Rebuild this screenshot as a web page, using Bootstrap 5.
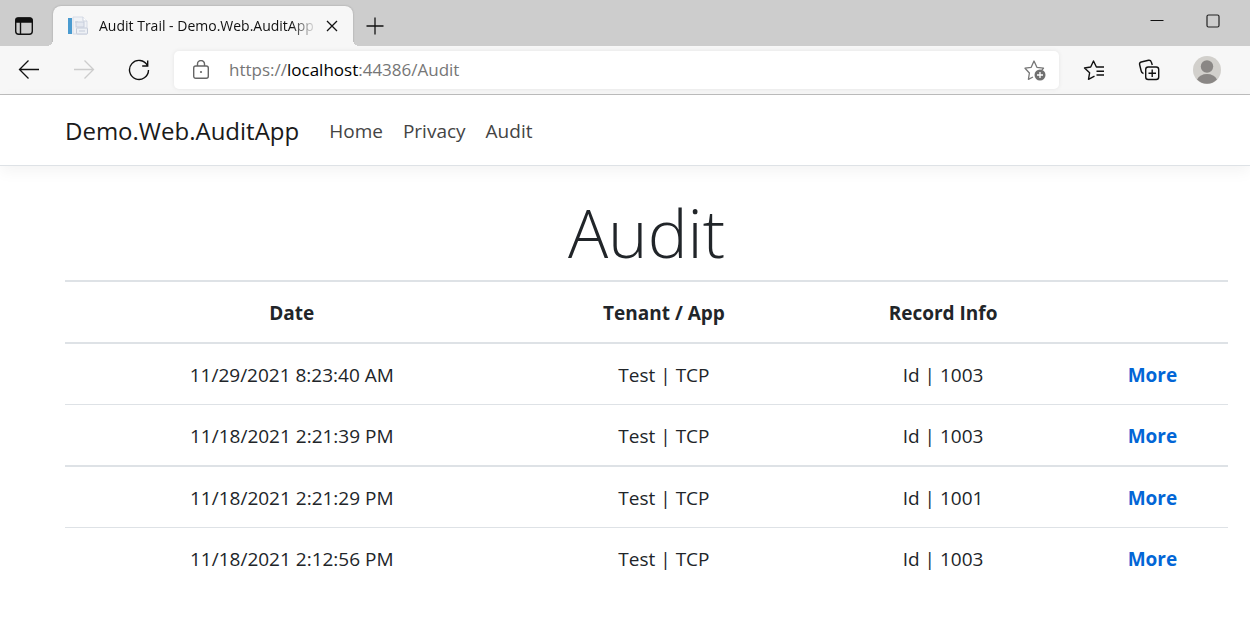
<!DOCTYPE html>
<html lang="en">
<head>
<meta charset="utf-8">
<meta name="viewport" content="width=device-width, initial-scale=1">
<title>Audit Trail - Demo.Web.AuditApp</title>
<link href="https://cdn.jsdelivr.net/npm/bootstrap@5.3.0/dist/css/bootstrap.min.css" rel="stylesheet">
<style>
body { font-family: "Open Sans", "Noto Sans", sans-serif; font-size: 19px; line-height: 30px; color: #212529; }
svg { display: block; flex: none; }
.titlebar { height: 46px; background: #cdcdcd; }
.tool { border: 0; background: none; padding: 0; color: #111; display: flex; align-items: center; justify-content: center; flex: none; }
.tab-menu { width: 48px; height: 40px; }
.tab-new { width: 43px; height: 40px; }
.window-tools { gap: 40px; height: 40px; padding-right: 28px; }
.browser-tab { position: relative; width: 300px; height: 40px; margin-left: 5px; padding: 0 14px; background: #f7f7f7; border-radius: 8px 8px 0 0; box-shadow: 0 0 2px #999; clip-path: inset(-3px -8px 0 -8px); }
.browser-tab::before, .browser-tab::after { content: ""; position: absolute; bottom: 0; width: 6px; height: 6px; }
.browser-tab::before { left: -6px; background: radial-gradient(circle at 0 0, transparent 6px, #f7f7f7 6px); }
.browser-tab::after { right: -6px; background: radial-gradient(circle at 100% 0, transparent 6px, #f7f7f7 6px); }
.tab-title { flex: 1 1 0; min-width: 0; margin: 0 6px 0 10px; overflow: hidden; white-space: nowrap; font-size: 14px; line-height: 20px; color: #111; -webkit-mask-image: linear-gradient(90deg, #000 192px, transparent 218px); mask-image: linear-gradient(90deg, #000 192px, transparent 218px); }
.toolbar { height: 49px; background: #f7f7f7; border-bottom: 1px solid #bdbdbd; padding: 0 29px 0 18px; }
.nav-tools { gap: 33px; margin-right: 24px; }
.side-tools { gap: 33px; margin-left: 24px; }
.address { height: 38px; background: #fff; border-radius: 5px; box-shadow: 0 0 4px #e4e4e4; padding: 0 13px 0 18px; }
.url { font-size: 17px; line-height: 24px; color: #767676; outline: 0; margin-left: 19px; white-space: nowrap; overflow: hidden; }
.url-host { color: #000; }
.page-pad { padding-left: 65px; padding-right: 22px; }
.site-nav { height: 71px; border-bottom: 1px solid #dee2e6; box-shadow: 0 5px 15px #0000000d; --bs-navbar-padding-y: 0; --bs-navbar-nav-link-padding-x: 10px; --bs-navbar-brand-font-size: 24px; --bs-navbar-brand-margin-end: 20px; --bs-navbar-brand-color: #1a1a1a; --bs-navbar-color: #444; padding-top: 2px; }
.page-title { font-size: 67px; line-height: 84px; font-weight: 300; margin: 24px 0 6px; }
.audit-table { border-collapse: separate; border-spacing: 0; table-layout: fixed; --bs-table-color: #212529; }
.audit-table > :not(caption) > * > * { padding: 16px 8px 14px; border-width: 1px 0 0; border-color: #dee2e6; }
.audit-table > thead > tr > th, .audit-table > tbody > tr:nth-child(odd) > td { border-top-width: 2px; }
.col-date { width: 39%; } .col-tenant { width: 25%; } .col-record { width: 23%; } .col-more { width: 13%; }
.more-link { color: #0366d6; }
</style>
</head>
<body>
<header>
  <div class="titlebar d-flex align-items-end">
    <button class="tool tab-menu" aria-label="Tab actions"><svg width="20" height="20" viewBox="0 0 20 20" fill="none" stroke="#111" stroke-width="1.4"><rect x="1.7" y="2.2" width="16.6" height="16" rx="3"/><path d="M2 3.5Q2 2 4 2H16Q18 2 18 4V6H2Z" fill="#111"/><path d="M6.5 6v12"/></svg></button>
    <div class="browser-tab d-flex align-items-center">
      <svg width="22" height="20" viewBox="0 0 22 20"><rect x="1" y="2" width="4" height="16" fill="#4a9bd0"/><path d="M6 1h10l4 4v13H6z" fill="#f0f2f6" stroke="#d6dbe6"/><path d="M16 1v4h4" fill="#fff" stroke="#cdd3df"/><path d="M8 6h3" stroke="#c2cad9"/><rect x="9" y="6" width="8" height="5" fill="#e4e8f0" stroke="#c6cddb"/><rect x="9.500" y="12" width="11" height="6" rx="1" fill="#edf0f5" stroke="#c4cbd9"/><path d="M12 15h6" stroke="#c4cbd9"/></svg>
      <span class="tab-title">Audit Trail - Demo.Web.AuditApp</span>
      <button class="tool" aria-label="Close tab"><svg width="14" height="14" viewBox="0 0 14 14" stroke="#111" stroke-width="1.3"><path d="M2 2l10 10M12 2L2 12"/></svg></button>
    </div>
    <button class="tool tab-new" aria-label="New tab"><svg width="18" height="18" viewBox="0 0 18 18" stroke="#111" stroke-width="1.3"><path d="M.5 9h17M9 .5v17"/></svg></button>
    <div class="window-tools ms-auto d-flex align-items-start">
      <button class="tool pt-2" aria-label="Minimize"><svg width="14" height="14" viewBox="0 0 14 14" stroke="#111"><path d="M.5 6.500h13"/></svg></button>
      <button class="tool pt-2" aria-label="Maximize"><svg width="18" height="14" viewBox="0 0 18 14" fill="none" stroke="#222" stroke-width="1.200"><rect x="3" y="1" width="12" height="12" rx="1.500"/></svg></button>
    </div>
  </div>
  <div class="toolbar d-flex align-items-center">
    <div class="nav-tools d-flex">
      <button class="tool" aria-label="Back"><svg width="22" height="22" viewBox="0 0 22 22" fill="none" stroke="#111" stroke-width="1.300"><path d="M21 10.500H1.500M10.500 1.500l-9 9 9 9"/></svg></button>
      <button class="tool" aria-label="Forward"><svg width="22" height="22" viewBox="0 0 22 22" fill="none" stroke="#ccc" stroke-width="1.300"><path d="M1 10.500h19.500M11.500 1.500l9 9-9 9"/></svg></button>
      <button class="tool" aria-label="Refresh"><svg width="22" height="22" viewBox="0 0 22 22" fill="none" stroke="#111" stroke-width="1.400"><path d="M19.400 6.500A9.500 9.500 0 1 0 20.500 11M19.700 1.500v5.500h-5.500"/></svg></button>
    </div>
    <div class="address d-flex align-items-center flex-grow-1">
      <svg width="18" height="20" viewBox="0 0 18 20" fill="none" stroke="#666" stroke-width="1.400"><rect x="1.700" y="6" width="14.600" height="12.300" rx="2"/><path d="M5.500 6V4a3.500 3.500 0 0 1 7 0v2"/><circle cx="9" cy="12" r="1.100" fill="#666" stroke="none"/></svg>
      <div class="url flex-grow-1" role="textbox" contenteditable="true" spellcheck="false" aria-label="Address">https://<span class="url-host">localhost</span>:44386/Audit</div>
      <button class="tool" aria-label="Add to favorites"><svg width="22" height="22" viewBox="0 0 22 22" fill="none" stroke="#777" stroke-width="1.300" stroke-linejoin="round"><path d="M9 18l-4.600 2.300 1-6.300L1 9.200l6.200-.9L10 2l2.900 6.300 6.600.9-1.700 1.800"/><circle cx="16" cy="16" r="5.500" fill="#707070" stroke="none"/><path d="M16 13v6M13 16h6" stroke="#fff"/></svg></button>
    </div>
    <div class="side-tools d-flex align-items-center">
      <button class="tool" aria-label="Favorites"><svg width="22" height="22" viewBox="0 0 22 22" fill="none" stroke="#111" stroke-width="1.400" stroke-linejoin="round"><path d="M11.500 17.200L5.500 20.300l1.100-6.500L1.500 9l6.200-1L10.500 2l2.900 6H21M13.500 12.300H21M13.500 16H21"/></svg></button>
      <button class="tool" aria-label="Collections"><svg width="22" height="22" viewBox="0 0 22 22" fill="none" stroke="#111" stroke-width="1.400"><rect x="7.700" y="8" width="13" height="12.500" rx="2.500"/><path d="M14.200 10.500v7.500M10.500 14.200H18M5.500 14.500C4 14.300 3.500 13.500 3.200 12L1.600 5.500Q1.300 3.500 3.200 3L10.500 1.300Q12.700 1 13.300 3L14.300 6"/></svg></button>
      <button class="tool" aria-label="Profile"><svg width="28" height="28" viewBox="0 0 28 28"><circle cx="14" cy="14" r="14" fill="#d2d0cc"/><circle cx="14" cy="10.500" r="6.200" fill="#8a8785"/><path d="M4 23.500Q7 18 14 18t10 5.500A14 14 0 0 1 4 23.500" fill="#8a8785"/></svg></button>
    </div>
  </div>
</header>
<nav class="navbar navbar-expand site-nav page-pad">
  <a class="navbar-brand" href="#">Demo.Web.AuditApp</a>
  <ul class="navbar-nav">
    <li class="nav-item"><a class="nav-link" href="#">Home</a></li>
    <li class="nav-item"><a class="nav-link" href="#">Privacy</a></li>
    <li class="nav-item"><a class="nav-link" href="#">Audit</a></li>
  </ul>
</nav>
<main class="page-pad">
  <h1 class="page-title text-center">Audit</h1>
  <table class="table audit-table text-center mb-0">
    <thead><tr><th class="col-date">Date</th><th class="col-tenant">Tenant / App</th><th class="col-record">Record Info</th><th class="col-more"></th></tr></thead>
    <tbody>
      <tr><td>11/29/2021 8:23:40 AM</td><td>Test | TCP</td><td>Id | 1003</td><td><a class="more-link fw-bold text-decoration-none" href="#">More</a></td></tr>
      <tr><td>11/18/2021 2:21:39 PM</td><td>Test | TCP</td><td>Id | 1003</td><td><a class="more-link fw-bold text-decoration-none" href="#">More</a></td></tr>
      <tr><td>11/18/2021 2:21:29 PM</td><td>Test | TCP</td><td>Id | 1001</td><td><a class="more-link fw-bold text-decoration-none" href="#">More</a></td></tr>
      <tr><td>11/18/2021 2:12:56 PM</td><td>Test | TCP</td><td>Id | 1003</td><td><a class="more-link fw-bold text-decoration-none" href="#">More</a></td></tr>
    </tbody>
  </table>
</main>
<script src="https://cdn.jsdelivr.net/npm/bootstrap@5.3.0/dist/js/bootstrap.bundle.min.js"></script>
</body>
</html>
